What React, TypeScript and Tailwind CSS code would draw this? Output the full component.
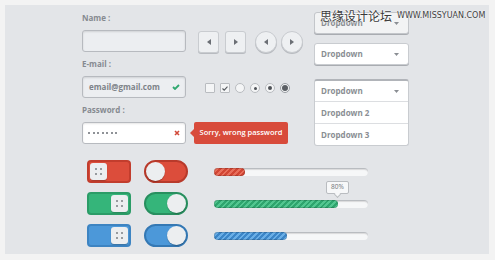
import React from "react";

const font = "font-['Open_Sans','Liberation_Sans',sans-serif]";

function Label({ children, className = "" }: { children: React.ReactNode; className?: string }) {
  return (
    <div className={`h-[12px] text-[8px] leading-[12px] font-bold text-[#868a90] ${className}`}>{children}</div>
  );
}

function SqBtn({ dir }: { dir: "l" | "r" }) {
  return (
    <div className="w-[21px] h-[22px] rounded-[3px] bg-[#eef0f2] border border-[#c9ccd0] shadow-[0_1px_0_#b8bbc0] flex items-center justify-center">
      <svg width="4" height="6" viewBox="0 0 4 6">
        {dir === "l" ? <path d="M4 0 L0 3 L4 6 Z" fill="#6b6f75" /> : <path d="M0 0 L4 3 L0 6 Z" fill="#6b6f75" />}
      </svg>
    </div>
  );
}

function CircBtn({ dir }: { dir: "l" | "r" }) {
  return (
    <div className="w-[22px] h-[22px] rounded-full bg-[#eef0f2] border border-[#c9ccd0] shadow-[0_1px_0_#b8bbc0] flex items-center justify-center">
      <svg width="4" height="6" viewBox="0 0 4 6">
        {dir === "l" ? <path d="M4 0 L0 3 L4 6 Z" fill="#6b6f75" /> : <path d="M0 0 L4 3 L0 6 Z" fill="#6b6f75" />}
      </svg>
    </div>
  );
}

function Caret() {
  return (
    <svg width="5" height="3" viewBox="0 0 5 3">
      <path d="M0 0 L5 0 L2.5 3 Z" fill="#8a8e93" />
    </svg>
  );
}

function Dots() {
  return (
    <div className="grid grid-cols-2 gap-[3px]">
      <span className="w-[2px] h-[2px] rounded-full bg-[#7b7f85]" />
      <span className="w-[2px] h-[2px] rounded-full bg-[#7b7f85]" />
      <span className="w-[2px] h-[2px] rounded-full bg-[#7b7f85]" />
      <span className="w-[2px] h-[2px] rounded-full bg-[#7b7f85]" />
    </div>
  );
}

function SquareToggle({ bg, border, on }: { bg: string; border: string; on: boolean }) {
  return (
    <div className={`w-[44px] h-[23px] rounded-[4px] border-2 ${bg} ${border} flex items-center px-[1px] ${on ? "justify-end" : "justify-start"}`}>
      <div className="w-[17px] h-[17px] rounded-[3px] bg-[#eceef0] shadow-[0_1px_1px_rgba(0,0,0,0.25)] flex items-center justify-center">
        <Dots />
      </div>
    </div>
  );
}

function RoundToggle({ bg, border, on }: { bg: string; border: string; on: boolean }) {
  return (
    <div className={`w-[44px] h-[23px] rounded-full border-2 ${bg} ${border} flex items-center px-[0px] ${on ? "justify-end" : "justify-start"}`}>
      <div className="w-[19px] h-[19px] rounded-full bg-[#eceef0] shadow-[0_1px_1px_rgba(0,0,0,0.25)]" />
    </div>
  );
}

function Bar({ fill, width, children }: { fill: string; width: number; children?: React.ReactNode }) {
  return (
    <div className="relative w-[154px] h-[8px] rounded-full bg-[#f6f7f8] border-t border-[#b9bcc0] shadow-[inset_0_1px_1px_rgba(0,0,0,0.12)]">
      <div className={`h-[8px] -mt-[1px] rounded-full ${fill} shadow-[inset_0_0_0_1px_rgba(0,0,0,0.15)]`} style={{ width }} />
      {children}
    </div>
  );
}

export default function App() {
  return (
    <div className={`w-[495px] h-[260px] bg-[#f3f3f3] p-[5px] ${font}`}>
      <div className="relative w-[484px] h-[249px] bg-[#e3e5e8] pl-[77px] pt-[7px]">
        {/* watermark */}
        <div className="absolute left-[315px] top-[3px] flex items-center gap-[5px] z-10 whitespace-nowrap">
          <span className="shrink-0 whitespace-nowrap text-[12px] leading-[16px] text-[#3a3a3a] font-['Noto_Sans_CJK_SC',sans-serif] [text-shadow:0_0_2px_#fff,0_0_2px_#fff]">思缘设计论坛</span>
          <span className="shrink-0 whitespace-nowrap text-[8px] leading-[16px] text-[#3f3f3f] font-['DejaVu_Sans',sans-serif] [text-shadow:0_0_2px_#fff]">WWW.MISSYUAN.COM</span>
        </div>

        {/* top */}
        <div className="flex items-start">
          {/* form */}
          <div className="w-[104px] flex flex-col">
            <Label>Name :</Label>
            <div className="mt-[6px] h-[22px] rounded-[3px] bg-[#eceef1] border border-[#b7babf] shadow-[inset_0_1px_2px_rgba(0,0,0,0.12)]" />
            <Label className="mt-[6px]">E-mail :</Label>
            <div className="mt-[6px] h-[22px] rounded-[3px] bg-[#eceef1] border border-[#b7babf] shadow-[inset_0_1px_2px_rgba(0,0,0,0.12)] flex items-center justify-between pl-[6px] pr-[5px]">
              <span className="text-[8px] font-bold text-[#7d8288]">email@gmail.com</span>
              <svg width="8" height="6" viewBox="0 0 8 6">
                <path d="M1 3 L3 5 L7 1" stroke="#2fa86f" strokeWidth="1.8" fill="none" />
              </svg>
            </div>
            <Label className="mt-[6px]">Password :</Label>
            <div className="relative mt-[6px] h-[22px] rounded-[3px] bg-white border border-[#b7babf] shadow-[inset_0_1px_2px_rgba(0,0,0,0.1)] flex items-center justify-between pl-[5px] pr-[5px]">
              <div className="flex gap-[2.5px]">
                <span className="w-[2px] h-[2px] rounded-full bg-[#6a6e74]" />
                <span className="w-[2px] h-[2px] rounded-full bg-[#6a6e74]" />
                <span className="w-[2px] h-[2px] rounded-full bg-[#6a6e74]" />
                <span className="w-[2px] h-[2px] rounded-full bg-[#6a6e74]" />
                <span className="w-[2px] h-[2px] rounded-full bg-[#6a6e74]" />
                <span className="w-[2px] h-[2px] rounded-full bg-[#6a6e74]" />
                <span className="w-[2px] h-[2px] rounded-full bg-[#6a6e74]" />
              </div>
              <svg width="6" height="6" viewBox="0 0 6 6">
                <path d="M1 1 L5 5 M5 1 L1 5" stroke="#d24a3a" strokeWidth="1.6" />
              </svg>
              <div className="absolute left-[111px] top-[-1px] w-[94px] h-[22px] rounded-[2px] bg-[#d84b3b] flex items-center justify-center">
                <div className="absolute left-[-4px] top-[7px] w-0 h-0 border-y-[4px] border-y-transparent border-r-[4px] border-r-[#d84b3b]" />
                <span className="text-[7.5px] font-semibold text-white">Sorry, wrong password</span>
              </div>
            </div>
          </div>

          {/* middle */}
          <div className="ml-[12px] mt-[18px] w-[105px] flex flex-col">
            <div className="flex items-center">
              <SqBtn dir="l" />
              <div className="ml-[6px]"><SqBtn dir="r" /></div>
              <div className="ml-[9px] mt-[1px]"><CircBtn dir="l" /></div>
              <div className="ml-[4px] mt-[1px]"><CircBtn dir="r" /></div>
            </div>
            <div className="mt-[30px] ml-[7px] flex items-center gap-[5px]">
              <div className="w-[10px] h-[10px] rounded-[1px] bg-[#f4f5f6] border border-[#b9bcc0]" />
              <div className="w-[10px] h-[10px] rounded-[1px] bg-[#f4f5f6] border border-[#b9bcc0] flex items-center justify-center">
                <svg width="6" height="5" viewBox="0 0 6 5"><path d="M0.5 2.5 L2.2 4.2 L5.5 0.6" stroke="#55595e" strokeWidth="1.1" fill="none" /></svg>
              </div>
              <div className="w-[10px] h-[10px] rounded-full bg-[#f4f5f6] border border-[#b9bcc0]" />
              <div className="w-[10px] h-[10px] rounded-full bg-[#f4f5f6] border border-[#b9bcc0] flex items-center justify-center">
                <div className="w-[3px] h-[3px] rounded-full bg-[#4e5257]" />
              </div>
              <div className="w-[10px] h-[10px] rounded-full bg-[#f4f5f6] border border-[#b9bcc0] flex items-center justify-center">
                <div className="w-[4px] h-[4px] rounded-full bg-[#4e5257]" />
              </div>
              <div className="w-[10px] h-[10px] rounded-full bg-[#f4f5f6] border border-[#9a9ea3] flex items-center justify-center">
                <div className="w-[6px] h-[6px] rounded-full bg-[#5b5f64]" />
              </div>
            </div>
          </div>

          {/* dropdowns */}
          <div className="ml-[11px] w-[95px] flex flex-col">
            <div className="h-[22px] rounded-[3px] bg-[#f2f3f4] border border-[#c3c6ca] shadow-[0_1px_0_#a9acb1] flex items-center justify-between pl-[6px] pr-[9px]">
              <span className="text-[8px] font-bold text-[#8a8e93]">Dropdown</span>
              <Caret />
            </div>
            <div className="mt-[9px] h-[22px] rounded-[3px] bg-white border border-[#c9ccd0] shadow-[0_1px_0_#a9acb1] flex items-center justify-between pl-[6px] pr-[9px]">
              <span className="text-[8px] font-bold text-[#8a8e93]">Dropdown</span>
              <Caret />
            </div>
            <div className="mt-[14px] rounded-[3px] bg-white border border-[#c9ccd0] border-t-2 border-t-[#b1b4b9] flex flex-col">
              <div className="h-[21px] flex items-center justify-between pl-[6px] pr-[9px] border-b border-[#dcdee1]">
                <span className="text-[8px] font-bold text-[#8a8e93]">Dropdown</span>
                <Caret />
              </div>
              <div className="h-[22px] flex items-center pl-[6px] border-b border-[#dcdee1]">
                <span className="text-[8px] font-bold text-[#8a8e93]">Dropdown 2</span>
              </div>
              <div className="h-[21px] flex items-center pl-[6px]">
                <span className="text-[8px] font-bold text-[#8a8e93]">Dropdown 3</span>
              </div>
            </div>
          </div>
        </div>

        {/* bottom */}
        <div className="mt-[14px] ml-[5px] flex flex-col gap-[9px]">
          <div className="flex items-center">
            <SquareToggle bg="bg-[#dc4d3b]" border="border-[#c23d2d]" on={false} />
            <div className="ml-[13px]"><RoundToggle bg="bg-[#dc4d3b]" border="border-[#b83a2b]" on={false} /></div>
            <div className="ml-[26px]">
              <Bar fill="bg-[image:repeating-linear-gradient(135deg,#d24634_0px,#d24634_2px,#e86e5b_2px,#e86e5b_4px)]" width={31} />
            </div>
          </div>
          <div className="flex items-center">
            <SquareToggle bg="bg-[#35b57a]" border="border-[#2b9c67]" on={true} />
            <div className="ml-[13px]"><RoundToggle bg="bg-[#35b57a]" border="border-[#288f5f]" on={true} /></div>
            <div className="ml-[26px]">
              <Bar fill="bg-[image:repeating-linear-gradient(135deg,#2ea56e_0px,#2ea56e_2px,#52c690_2px,#52c690_4px)]" width={124}>
                <div className="absolute left-[112px] top-[-20px] w-[23px] h-[13px] rounded-[2px] bg-[#f7f8f9] border border-[#b9bcc0] flex items-center justify-center">
                  <span className="text-[6.5px] leading-[8px] text-[#6f7378]">80%</span>
                  <div className="absolute left-[8px] bottom-[-4px] w-[5px] h-[5px] rotate-45 bg-[#f7f8f9] border-r border-b border-[#b9bcc0]" />
                </div>
              </Bar>
            </div>
          </div>
          <div className="flex items-center">
            <SquareToggle bg="bg-[#4c98d9]" border="border-[#3d84c2]" on={true} />
            <div className="ml-[13px]"><RoundToggle bg="bg-[#4c98d9]" border="border-[#3478b4]" on={true} /></div>
            <div className="ml-[26px]">
              <Bar fill="bg-[image:repeating-linear-gradient(135deg,#3c86c8_0px,#3c86c8_2px,#69aee6_2px,#69aee6_4px)]" width={73} />
            </div>
          </div>
        </div>
      </div>
    </div>
  );
}
